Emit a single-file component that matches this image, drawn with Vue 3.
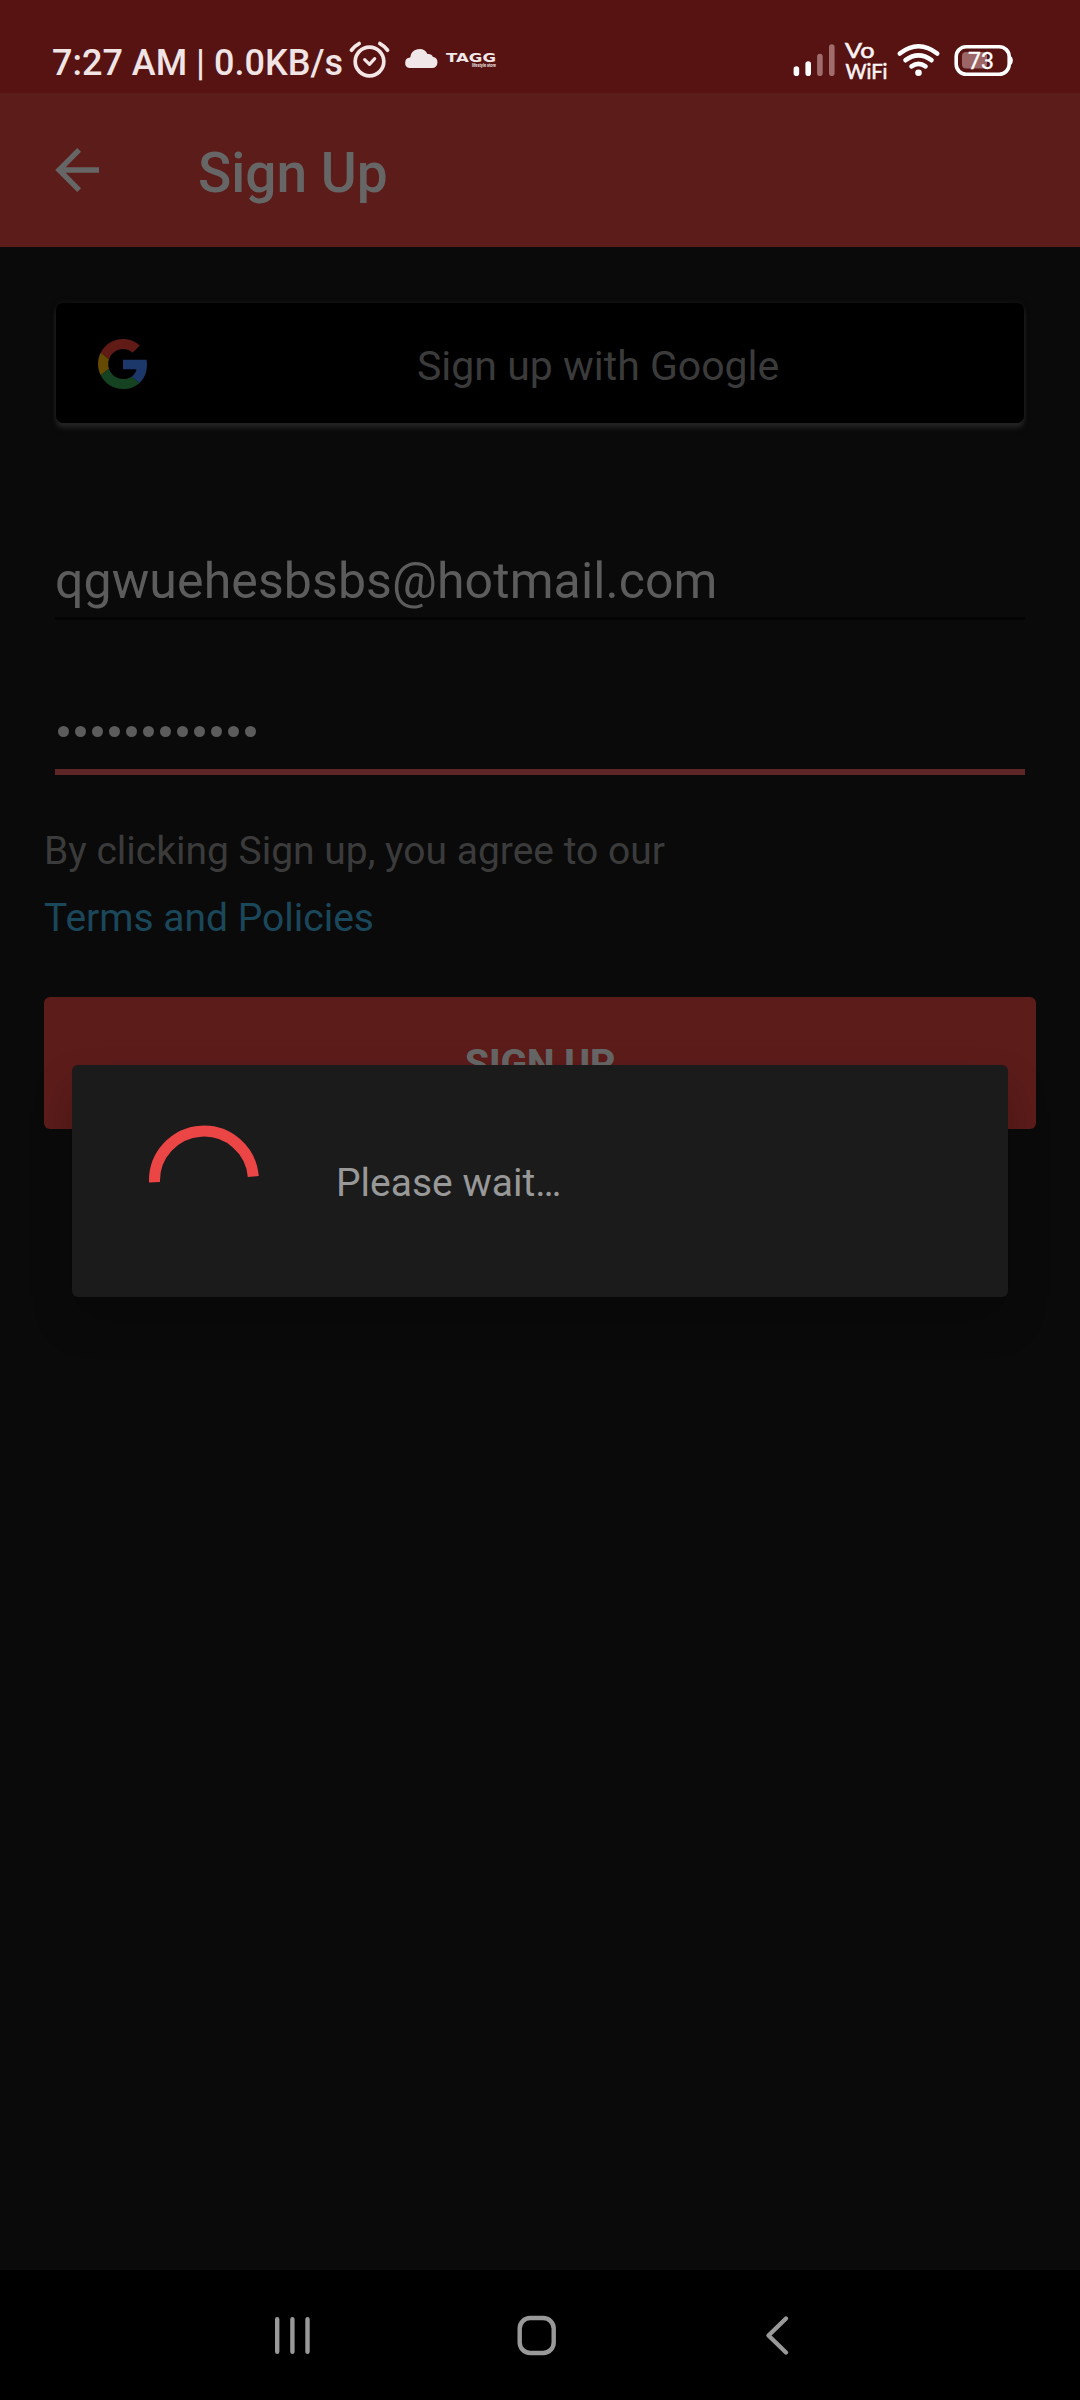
<script setup>
const dots = Array.from({ length: 12 }, (_, i) => i)
</script>

<template>
  <div class="screen">
    <header class="status">
      <span class="clock">7:27 AM | 0.0KB/s</span>
      <svg class="status-left" width="160" height="46" viewBox="345 36 160 46">
        <g fill="none" stroke="#f3e6e6" stroke-linecap="round" stroke-linejoin="round">
          <circle cx="369.500" cy="61.500" r="14.300" stroke-width="3.700" />
          <path d="M364.700 59.700l4.800 4.600 5.200-5.600" stroke-width="3.200" />
          <path d="M351.500 50.200q3-4.200 7.600-6.600M387.500 50.200q-3-4.200-7.600-6.600" stroke-width="3.800" />
        </g>
        <path d="M409.500 68h22.500a5.700 5.700 0 0 0 .8-11.300c-.8-1.900-2.800-3-5.300-2.600a9.200 9.200 0 0 0-17.300 3.400A5.300 5.300 0 0 0 409.500 68z" fill="#f0e8e8" />
        <text x="446" y="62" textLength="50" lengthAdjust="spacingAndGlyphs" class="tagg">TAGG</text>
        <text x="472" y="67" textLength="24" lengthAdjust="spacingAndGlyphs" class="tagg-sub">lifestyle store</text>
      </svg>
      <svg class="status-right" width="225" height="46" viewBox="790 36 225 46">
        <g stroke="#fff" stroke-linecap="round" stroke-width="5.600">
          <path d="M796.400 69v4.200M808.200 64v9.200" />
          <path d="M819.900 56.500v16.700M831.800 47v26.200" stroke="#a06c6c" />
        </g>
        <text x="845" y="57.500" textLength="29.500" lengthAdjust="spacingAndGlyphs" class="vo">Vo</text>
        <text x="845.500" y="78.500" textLength="42" lengthAdjust="spacingAndGlyphs" class="vo">WiFi</text>
        <g fill="none" stroke="#fff" stroke-linecap="round" stroke-width="4.600">
          <path d="M899.800 53.500q18.700-14.500 37.400 0M905.500 60.200q13-9.500 26 0M911.500 66.300q7-5 14 0" />
        </g>
        <circle cx="918.500" cy="72.700" r="3.300" fill="#fff" />
        <rect x="962" y="52" width="25" height="16.500" rx="4" fill="#9c6666" />
        <rect x="956.200" y="46.700" width="53" height="27.600" rx="10" fill="none" stroke="#fff" stroke-width="3.600" />
        <path d="M1010 55.500q2.800 1.500 2.800 5t-2.800 5z" fill="#fff" />
        <text x="968" y="69" textLength="26" lengthAdjust="spacingAndGlyphs" class="battery">73</text>
      </svg>
    </header>

    <div class="appbar">
      <svg width="46" height="46" viewBox="54 147 46 46" fill="#666">
        <path d="M99 167.250H65.700l15.300-15.400-3.750-3.850L55.250 170l22 22 3.750-3.850-15.300-15.400H99z" />
      </svg>
      <h1>Sign Up</h1>
    </div>

    <main>
      <button class="google">
        <svg width="50" height="50" viewBox="0 0 48 48">
          <path fill="#611b17" d="M24 9.500c3.540 0 6.710 1.220 9.210 3.600l6.850-6.850C35.900 2.380 30.470 0 24 0 14.620 0 6.510 5.380 2.560 13.220l7.980 6.190C12.430 13.720 17.740 9.500 24 9.500z" />
          <path fill="#1c3769" d="M46.980 24.550c0-1.570-.15-3.090-.38-4.550H24v9.020h12.940c-.58 2.960-2.260 5.480-4.780 7.180l7.730 6c4.510-4.180 7.090-10.360 7.090-17.650z" />
          <path fill="#654b02" d="M10.530 28.590c-.48-1.450-.76-2.990-.76-4.590s.27-3.140.76-4.590l-7.980-6.190C.92 16.460 0 20.120 0 24c0 3.880.92 7.540 2.560 10.780l7.970-6.190z" />
          <path fill="#154321" d="M24 48c6.480 0 11.930-2.130 15.890-5.810l-7.730-6c-2.150 1.450-4.920 2.300-8.160 2.300-6.260 0-11.570-4.220-13.470-9.910l-7.980 6.190C6.510 42.620 14.620 48 24 48z" />
        </svg>
        <span>Sign up with Google</span>
      </button>

      <div class="field email"><span>qgwuehesbsbs@hotmail.com</span></div>
      <div class="field password"><i v-for="d in dots" :key="d"></i></div>

      <p class="terms">By clicking Sign up, you agree to our<br /><a>Terms and Policies</a></p>
      <button class="submit">SIGN UP</button>
    </main>

    <nav>
      <svg width="620" height="60" viewBox="230 2305 620 60" fill="none" stroke="#999" stroke-linecap="round" stroke-width="4.400">
        <path d="M277.200 2319.200v32.600M292.400 2319.200v32.600M307.500 2319.200v32.600" />
        <rect x="519.700" y="2318" width="34" height="35" rx="10.500" />
        <path d="M786 2318.500L768.500 2335.500 786 2352.500" stroke-linejoin="round" />
      </svg>
    </nav>

    <div class="dialog">
      <svg width="112" height="112" viewBox="148 1125 112 112" fill="none" stroke="#ec4545" stroke-width="11">
        <path d="M154.500 1182.300A49.500 49.500 0 0 1 253.300 1176.500" />
      </svg>
      <span>Please wait…</span>
    </div>
  </div>
</template>

<style>
body {
  background: #0a0a0a;
}
</style>

<style scoped>
.screen {
  position: relative;
  display: flex;
  flex-direction: column;
  width: 1080px;
  height: 2400px;
  overflow: hidden;
  background: #0a0a0a;
  font-family: Roboto, "Liberation Sans", sans-serif;
}
.screen * {
  box-sizing: border-box;
}
button {
  border: 0;
  font-family: inherit;
}
svg {
  flex: none;
  display: block;
}
.status {
  height: 93px;
  display: flex;
  align-items: flex-start;
  padding: 36px 65px 0 52px;
  background: #571212;
}
.clock {
  width: 293px;
  white-space: nowrap;
  font-size: 36px;
  font-weight: 500;
  line-height: 55px;
  color: #f0e4e4;
}
.status-right {
  margin-left: auto;
}
.tagg {
  font: 700 12.500px "DejaVu Sans", sans-serif;
  fill: #f3e8e8;
}
.tagg-sub {
  font: 700 4.500px Inter, sans-serif;
  fill: #f3e8e8;
}
.vo {
  font: 400 21px Lato, sans-serif;
  fill: #fbf4f4;
  stroke: #fbf4f4;
  stroke-width: 0.600px;
}
.battery {
  font: 400 24px Roboto, sans-serif;
  fill: #fff;
  stroke: #fff;
  stroke-width: 0.300px;
}
.appbar {
  height: 154px;
  display: flex;
  align-items: center;
  padding-left: 54px;
  background: #5c1c1a;
}
h1 {
  margin: 6px 0 0 98px;
  font-size: 55px;
  font-weight: 500;
  line-height: 64px;
  color: #666;
}
main {
  flex: 1;
  display: flex;
  flex-direction: column;
  padding: 56px 44px 0;
}
.google {
  display: flex;
  align-items: center;
  height: 120px;
  margin: 0 12px;
  padding: 2px 0 0 42px;
  border-radius: 7px;
  background: #000;
  color: #3b3b3b;
  box-shadow: 0 5px 5px #232323, 0 0 5px #181818;
}
.google span {
  margin: 3px 0 0 269px;
  font-size: 41px;
  line-height: 48px;
  white-space: nowrap;
}
.field {
  margin: 0 11px;
  font-size: 50px;
  line-height: 58px;
  letter-spacing: 0.100px;
  color: #5c5c5c;
}
.email {
  margin-top: 129px;
  height: 68px;
  border-bottom: 3px solid #040404;
}
.password {
  display: flex;
  gap: 6px;
  height: 155px;
  padding: 106px 0 0 3px;
  border-bottom: 6px solid #5e2626;
}
.password i {
  width: 11px;
  height: 11px;
  border-radius: 50%;
  background: #5c5c5c;
}
.terms {
  margin: 43px 0 0;
  font-size: 39px;
  line-height: 67px;
  color: #3b3b3b;
}
.terms a {
  color: #1b475b;
}
.submit {
  height: 132px;
  margin-top: 45px;
  padding: 2px 0 0;
  border-radius: 6px;
  background: #5c1c1a;
  color: #666;
  font-size: 39px;
  font-weight: 800;
}
nav {
  height: 130px;
  padding: 35px 230px 0;
  background: #000;
}
/* Modal progress dialog, floats over the form */
.dialog {
  position: absolute;
  left: 72px;
  top: 1065px;
  width: 936px;
  height: 232px;
  display: flex;
  align-items: center;
  padding-left: 76px;
  border-radius: 6px;
  background: #1b1b1b;
  box-shadow: 0 22px 40px rgba(0, 0, 0, 0.220);
}
.dialog span {
  margin: 3px 0 0 76px;
  font-size: 39px;
  line-height: 46px;
  color: #989898;
}
</style>
